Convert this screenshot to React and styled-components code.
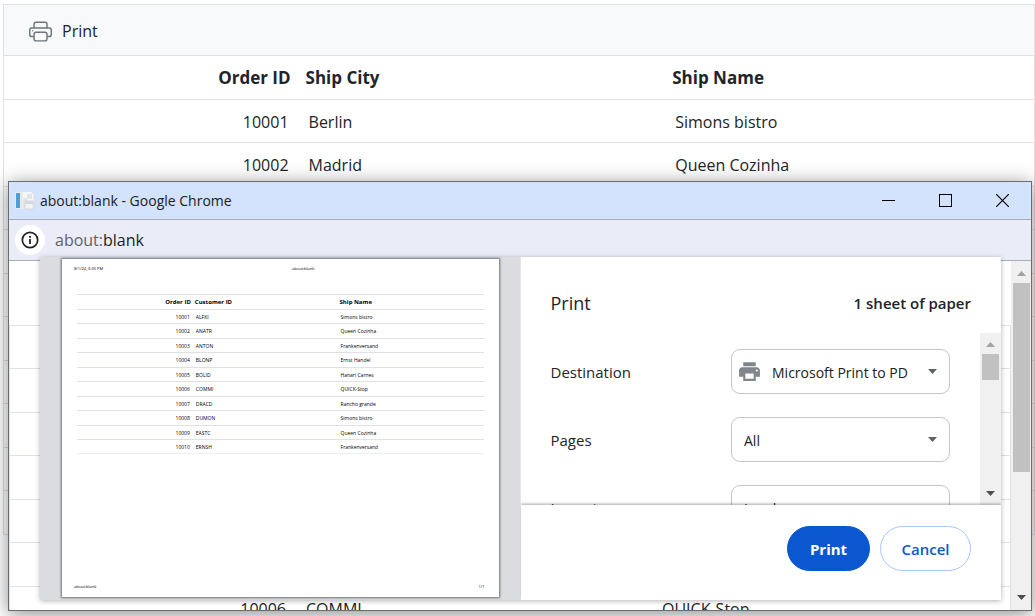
import React from "react";
import styled, { createGlobalStyle } from "styled-components";
import { BsPrinter } from "react-icons/bs";
import { MdPrint } from "react-icons/md";

const GlobalStyle = createGlobalStyle`
  *, *::before, *::after { box-sizing: border-box; }
  body {
    margin: 0;
    background: #fff;
    color: #212529;
    font-family: "Open Sans", "Noto Sans", sans-serif;
    font-size: 16px;
  }
  button, select { font-family: inherit; }
`;

const Page = styled.main`
  position: relative;
  min-height: 100vh;
  padding: 4px 0 0 3px;
  overflow: hidden;
`;

const GridPanel = styled.section`
  border: 1px solid #dee2e6;
`;

const Toolbar = styled.div`
  display: flex;
  align-items: center;
  height: 50px;
  padding: 2px 25px 0;
  background: #f8f9fa;
`;

const ToolButton = styled.button`
  display: flex;
  align-items: center;
  gap: 10px;
  padding: 0;
  border: 0;
  background: none;
  color: #212529;
  font-size: 16px;
  line-height: 24px;

  svg { color: #6c757d; }
`;

const Table = styled.table`
  width: 100%;
  table-layout: fixed;
  border-collapse: separate;
  border-spacing: 0;
  font-size: 16px;
  line-height: 24px;

  th, td {
    height: 43px;
    padding: 1px 9px 0 11px;
    border-top: 1px solid #dee2e6;
    text-align: left;
    white-space: nowrap;
  }
  th { padding: 1px 7px 0 8px; font-size: 17px; font-weight: 700; }
  thead th, tbody tr:nth-child(even) td { height: 44px; }
  th:first-child, td:first-child { width: 28.5%; text-align: right; }
  th:nth-child(2), td:nth-child(2) { width: 35.6%; }
`;

const DocumentTable = styled(Table)`
  thead th, tbody tr:nth-child(even) td { height: 43px; }
  tbody tr:nth-child(odd) td { height: 44px; }
`;

const MiniTable = styled(Table)`
  font-size: 5px;
  line-height: 8px;
  color: #000;

  th, td { height: 14px; padding: 0 3px; }
  th { padding: 0 2px; font-size: 6px; }
  thead th, tbody tr:nth-child(even) td { height: 15px; }
  tbody tr:last-child td { border-bottom: 1px solid #eceef0; }
`;

const Window = styled.section`
  position: absolute;
  top: 181px;
  left: 8px;
  right: 3px;
  border: 1px solid #6a6c70;
  background: #fff;
  box-shadow: 0 3px 18px rgba(0, 0, 0, 0.45);
`;

const TitleBar = styled.header`
  display: flex;
  align-items: center;
  gap: 5px;
  height: 38px;
  padding-left: 6px;
  background: #d3e2fd;
  border-bottom: 1px solid #a9adb5;
  color: #202124;
  font-size: 14px;
`;

const WindowControls = styled.div`
  display: flex;
  margin-left: auto;
`;

const ControlButton = styled.button`
  display: flex;
  align-items: center;
  justify-content: center;
  width: 57px;
  height: 37px;
  padding: 0;
  border: 0;
  background: none;
`;

const AddressBar = styled.div`
  display: flex;
  align-items: center;
  gap: 10px;
  height: 41px;
  padding-left: 6px;
  background: #eaedf7;
  border-bottom: 1px solid #a9adb5;
  color: #5f6368;
  font-size: 16px;

  b { font-weight: 400; color: #202124; }
`;

const InfoButton = styled.button`
  display: flex;
  align-items: center;
  justify-content: center;
  width: 30px;
  height: 30px;
  padding: 0;
  border: 0;
  border-radius: 50%;
  background: #fff;
`;

const Client = styled.div`
  display: flex;
  height: 349px;
`;

const Document = styled.div`
  flex: 1;
  min-width: 0;
  padding-top: 64px;
  overflow: hidden;
`;

const DocumentGrid = styled.div`
  border: solid #dee2e6;
  border-width: 0 1px;
`;

const ScrollBar = styled.div`
  display: flex;
  flex-direction: column;
  align-items: center;
  width: ${(p) => p.$width}px;
  flex: none;
  padding: ${(p) => p.$pad}px 0;
  background: #f0f0f0;

  svg { flex: none; }
  svg:last-child { margin-top: auto; }
`;

const Thumb = styled.div`
  width: 17px;
  height: ${(p) => p.$height}px;
  margin-top: ${(p) => p.$gap}px;
  background: #c1c1c1;
`;

const Dialog = styled.div`
  position: absolute;
  top: 75px;
  left: 31px;
  right: 30px;
  display: flex;
  height: 343px;
  background: #fff;
  box-shadow: 0 1px 5px rgba(0, 0, 0, 0.3);
`;

const Preview = styled.div`
  width: calc(50% - 1px);
  flex: none;
  padding: 2px 21px 3px 22px;
  background: #dadce0;
`;

const Sheet = styled.article`
  display: flex;
  flex-direction: column;
  height: 100%;
  padding: 6px 14px 6px 12px;
  background: #fff;
  box-shadow: 0 0 2px 1px #6f7278;
  font-size: 4px;
  line-height: 8px;
  color: #000;
`;

const SheetLine = styled.div`
  display: grid;
  grid-template-columns: 1fr 1fr 1fr;

  span:nth-child(2) { text-align: center; padding-left: 48px; }
  span:last-child { text-align: right; }
`;

const SheetBody = styled.div`
  flex: 1;
  padding: 21px 1px 0 3px;
`;

const Settings = styled.form`
  display: flex;
  flex-direction: column;
  flex: 1;
  min-width: 0;
  border-left: 1px solid #e4e6ee;
`;

const SettingsHeader = styled.div`
  display: flex;
  align-items: center;
  justify-content: space-between;
  height: 76px;
  flex: none;
  padding: 16px 30px 0;

  h1 { margin: 0; font-size: 18px; font-weight: 400; }
  strong { font-size: 15px; font-weight: 600; }
`;

const SettingsBody = styled.div`
  display: flex;
  flex: 1;
  min-height: 0;
  overflow: hidden;
`;

const Fields = styled.div`
  display: flex;
  flex-direction: column;
  gap: 23px;
  flex: 1;
  padding: 16px 30px 0;
`;

const Field = styled.div`
  display: flex;
  align-items: center;
  justify-content: space-between;
  font-size: 15px;
`;

const SelectBox = styled.div`
  position: relative;
  width: 219px;

  > svg { position: absolute; pointer-events: none; }
  > svg:last-child { right: 13px; top: 20px; }
  > svg:first-child:not(:last-child) { left: 6px; top: 10px; color: #80868b; }
`;

const Select = styled.select`
  width: 100%;
  height: 45px;
  padding: 2px 40px 0 ${(p) => (p.$icon ? 40 : 12)}px;
  border: 1px solid #c4c6c9;
  border-radius: 9px;
  appearance: none;
  background: #fff;
  color: #202124;
  font-size: 14px;
`;

const Footer = styled.div`
  position: relative;
  display: flex;
  align-items: center;
  justify-content: flex-end;
  gap: 10px;
  height: 95px;
  flex: none;
  padding: 0 30px 9px;
  background: #fff;
  box-shadow: 0 -1px 3px rgba(0, 0, 0, 0.35);
  clip-path: inset(-6px 0 0 0);
`;

const PillButton = styled.button`
  height: 45px;
  width: ${(p) => (p.$primary ? 83 : 91)}px;
  padding: 2px 0 0;
  border: 1px solid ${(p) => (p.$primary ? "#0b57d0" : "#a8c7fa")};
  border-radius: 23px;
  background: ${(p) => (p.$primary ? "#0b57d0" : "#fff")};
  color: ${(p) => (p.$primary ? "#fff" : "#0b57d0")};
  font-size: 15px;
  font-weight: ${(p) => (p.$primary ? 700 : 600)};
`;

const names = ["Simons bistro", "Queen Cozinha", "Frankenversand", "Ernst Handel", "Hanari Carnes", "QUICK-Stop", "Rancho grande"];
const customers = ["ALFKI", "ANATR", "ANTON", "BLONP", "BOLID", "COMMI", "DRACD", "DUMON", "EASTC", "ERNSH"];
const customerRows = customers.map((value, i) => [10001 + i, value, names[i % names.length]]);
const blankRows = (count) => Array.from({ length: count }, () => ["", "", ""]);

const shipRows = [
  [10001, "Berlin", "Simons bistro"],
  [10002, "Madrid", "Queen Cozinha"],
  ...blankRows(8),
];
const documentRows = [...blankRows(5), customerRows[5]];

function OrderTable({ as: TableKind = Table, headings, rows }) {
  return (
    <TableKind>
      <thead>
        <tr>
          {headings.map((heading, i) => (
            <th key={i}>{heading}</th>
          ))}
        </tr>
      </thead>
      <tbody>
        {rows.map((row, r) => (
          <tr key={r}>
            {row.map((cell, i) => (
              <td key={i}>{cell}</td>
            ))}
          </tr>
        ))}
      </tbody>
    </TableKind>
  );
}

const Arrow = ({ up, color = "#505050" }) => (
  <svg width="9" height="5" viewBox="0 0 9 5" aria-hidden="true">
    <path d={up ? "M0 5L4.5 0L9 5Z" : "M0 0L4.5 5L9 0Z"} fill={color} />
  </svg>
);

const PageIcon = () => (
  <svg width="20" height="20" viewBox="0 0 20 20" aria-hidden="true">
    <path d="M0 1h10v17H0z" fill="#e6ecf4" />
    <path d="M1 2h4v15H1z" fill="#4d9fd6" />
    <path d="M7 .5h9l3 3V17H7z" fill="#f6f6f6" stroke="#d6d8dc" strokeWidth=".6" />
    <path d="M12 3h5v5h-5zM8 7h4v9H8z" fill="#e2e4e7" />
    <path d="M10 10h8v8h-8z" fill="#f4f4f5" stroke="#c9ccd1" strokeWidth=".6" />
    <path d="M10 10h8v3h-8z" fill="#d5d8dc" />
  </svg>
);

function SettingField({ id, label, options, icon }) {
  return (
    <Field>
      <label htmlFor={id}>{label}</label>
      <SelectBox>
        {icon}
        <Select id={id} $icon={Boolean(icon)}>
          {options.map((option) => (
            <option key={option}>{option}</option>
          ))}
        </Select>
        <Arrow color="#5f6368" />
      </SelectBox>
    </Field>
  );
}

function PrintDialog() {
  return (
    <Dialog role="dialog" aria-label="Print">
      <Preview>
        <Sheet>
          <SheetLine>
            <span>8/1/24, 6:35 PM</span>
            <span>about:blank</span>
            <span />
          </SheetLine>
          <SheetBody>
            <OrderTable as={MiniTable} headings={["Order ID", "Customer ID", "Ship Name"]} rows={customerRows} />
          </SheetBody>
          <SheetLine>
            <span>about:blank</span>
            <span />
            <span>1/1</span>
          </SheetLine>
        </Sheet>
      </Preview>
      <Settings onSubmit={(e) => e.preventDefault()}>
        <SettingsHeader>
          <h1>Print</h1>
          <strong>1 sheet of paper</strong>
        </SettingsHeader>
        <SettingsBody>
          <Fields>
            <SettingField id="destination" label="Destination" options={["Microsoft Print to PDF", "Save as PDF"]} icon={<MdPrint size={25} />} />
            <SettingField id="pages" label="Pages" options={["All", "Custom"]} />
            <SettingField id="layout" label="Layout" options={["Landscape", "Portrait"]} />
          </Fields>
          <ScrollBar $width={21} $pad={9}>
            <Arrow up color="#a3a3a3" />
            <Thumb $height={26} $gap={7} />
            <Arrow />
          </ScrollBar>
        </SettingsBody>
        <Footer>
          <PillButton $primary type="submit">Print</PillButton>
          <PillButton type="button">Cancel</PillButton>
        </Footer>
      </Settings>
    </Dialog>
  );
}

export default function App() {
  return (
    <Page>
      <GlobalStyle />
      <GridPanel>
        <Toolbar>
          <ToolButton>
            <BsPrinter size={23} />
            Print
          </ToolButton>
        </Toolbar>
        <OrderTable headings={["Order ID", "Ship City", "Ship Name"]} rows={shipRows} />
      </GridPanel>

      <Window>
        <TitleBar>
          <PageIcon />
          <span>about:blank - Google Chrome</span>
          <WindowControls>
            <ControlButton aria-label="Minimize">
              <svg width="13" height="13"><path d="M0 6.5H13" stroke="#000" /></svg>
            </ControlButton>
            <ControlButton aria-label="Maximize">
              <svg width="13" height="13"><rect x=".5" y=".5" width="12" height="12" fill="none" stroke="#000" /></svg>
            </ControlButton>
            <ControlButton aria-label="Close">
              <svg width="13" height="13"><path d="M0 0L13 13M13 0L0 13" stroke="#000" strokeWidth="1.2" /></svg>
            </ControlButton>
          </WindowControls>
        </TitleBar>
        <AddressBar>
          <InfoButton aria-label="View site information">
            <svg width="18" height="18" viewBox="0 0 18 18">
              <circle cx="9" cy="9" r="7.7" fill="none" stroke="#202124" strokeWidth="1.7" />
              <path d="M9 8v5M9 5v1.8" stroke="#202124" strokeWidth="1.8" />
            </svg>
          </InfoButton>
          <span>about:<b>blank</b></span>
        </AddressBar>
        <Client>
          <Document>
            <DocumentGrid>
              <OrderTable as={DocumentTable} headings={["", "", ""]} rows={documentRows} />
            </DocumentGrid>
          </Document>
          <ScrollBar $width={20} $pad={10}>
            <Arrow up color="#a3a3a3" />
            <Thumb $height={189} $gap={7} />
            <Arrow />
          </ScrollBar>
        </Client>
        <PrintDialog />
      </Window>
    </Page>
  );
}
